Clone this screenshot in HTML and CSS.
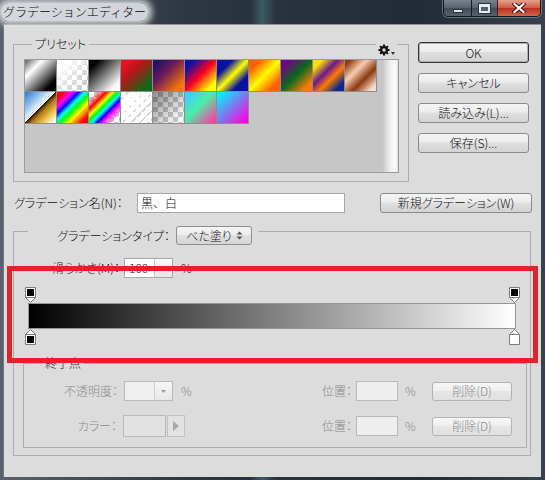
FILE: index.html
```html
<!DOCTYPE html>
<html lang="ja">
<head>
<meta charset="utf-8">
<title>グラデーションエディター</title>
<link rel="stylesheet" href="styles.css">
</head>
<body>
<div class="window">
  <header class="titlebar">
    <span class="title">グラデーションエディター</span>
    <div class="capbtns">
      <span class="cap min"><i class="minbar"></i></span>
      <span class="cap max"><i class="maxbox"></i></span>
      <span class="cap close"><svg width="14" height="10" viewBox="0 0 14 10"><path d="M2.5 1L11.5 9M11.5 1L2.5 9" stroke="#3a0d06" stroke-width="4" stroke-linecap="square"/><path d="M2.5 1L11.5 9M11.5 1L2.5 9" stroke="#fff" stroke-width="2.2" stroke-linecap="square"/></svg></span>
    </div>
  </header>
  <main class="client">
    <div class="top">
      <fieldset class="group presets">
        <legend>プリセット</legend>
        <span class="gear"><svg width="12" height="12" viewBox="0 0 12 12"><g fill="#111"><circle cx="6" cy="6" r="4"/><rect x="5" y="0.5" width="2" height="11"/><rect x="0.5" y="5" width="11" height="2"/><rect x="5" y="0.5" width="2" height="11" transform="rotate(45 6 6)"/><rect x="5" y="0.5" width="2" height="11" transform="rotate(-45 6 6)"/></g><circle cx="6" cy="6" r="1.7" fill="#dcdcdc"/></svg><svg class="gearcaret" width="4" height="3" viewBox="0 0 4 3"><path d="M0 0H4L2 3Z" fill="#333"/></svg></span>
        <div class="swatchbox">
          <div class="swatches">
            <div class="sw s1"></div><div class="sw s2"></div><div class="sw s3"></div><div class="sw s4"></div>
            <div class="sw s5"></div><div class="sw s6"></div><div class="sw s7"></div><div class="sw s8"></div>
            <div class="sw s9"></div><div class="sw s10"></div><div class="sw s11"></div>
            <div class="sw s12"></div><div class="sw s13"></div><div class="sw s14"></div><div class="sw s15"></div>
            <div class="sw s16"></div><div class="sw s17"></div><div class="sw s18"></div>
          </div>
          <div class="vscroll"></div>
        </div>
      </fieldset>
      <div class="btncol">
        <button class="btn ok">OK</button>
        <button class="btn">キャンセル</button>
        <button class="btn">読み込み(L)...</button>
        <button class="btn">保存(S)...</button>
      </div>
    </div>

    <div class="namerow">
      <span class="namelbl">グラデーション名(N)：</span>
      <div class="textbox namebox">黒、白</div>
      <button class="btn newbtn">新規グラデーション(W)</button>
    </div>

    <fieldset class="group typebox">
      <legend class="typelegend">
        <span class="typelbl">グラデーションタイプ：</span>
        <span class="select">べた塗り<svg width="7" height="9" viewBox="0 0 7 9"><path d="M0.5 3.5L3.5 0.5L6.5 3.5Z M0.5 5.5L3.5 8.5L6.5 5.5Z" fill="#555"/></svg></span>
      </legend>

      <div class="row smooth">
        <span class="lbl smlbl">滑らかさ(M)：</span>
        <div class="combo">
          <span class="val">100</span>
          <span class="dd"><svg width="5" height="3" viewBox="0 0 5 3"><path d="M0 0H5L2.5 3Z" fill="#777"/></svg></span>
        </div>
        <span class="pct">%</span>
      </div>

      <div class="editor">
        <div class="track">
          <span class="stop" style="left: calc(0% - 5px)"><svg width="12" height="16" viewBox="0 0 12 16"><path d="M0.5 0.5H10.5V10.5L5.5 15.5L0.5 10.5Z" fill="#fff" stroke="#7c7c7c"/><path d="M0.5 10.5H10.5" stroke="#7c7c7c"/><rect x="2" y="2" width="7" height="7" fill="#000"/></svg></span>
          <span class="stop" style="left: calc(100% - 5px)"><svg width="12" height="16" viewBox="0 0 12 16"><path d="M0.5 0.5H10.5V10.5L5.5 15.5L0.5 10.5Z" fill="#fff" stroke="#7c7c7c"/><path d="M0.5 10.5H10.5" stroke="#7c7c7c"/><rect x="2" y="2" width="7" height="7" fill="#000"/></svg></span>
        </div>
        <div class="gbar"></div>
        <div class="track">
          <span class="stop" style="left: calc(0% - 5px)"><svg width="12" height="16" viewBox="0 0 12 16"><path d="M5.5 0.5L10.5 5.5V15.5H0.5V5.5Z" fill="#fff" stroke="#7c7c7c"/><path d="M0.5 5.5H10.5" stroke="#7c7c7c"/><rect x="2" y="7" width="7" height="7" fill="#000"/></svg></span>
          <span class="stop" style="left: calc(100% - 5px)"><svg width="12" height="16" viewBox="0 0 12 16"><path d="M5.5 0.5L10.5 5.5V15.5H0.5V5.5Z" fill="#fff" stroke="#7c7c7c"/><path d="M0.5 5.5H10.5" stroke="#7c7c7c"/></svg></span>
        </div>
      </div>

      <fieldset class="group stopbox">
        <legend>終了点</legend>
        <div class="row srow r1">
          <span class="lbl slbl dis">不透明度：</span>
          <div class="combo off">
            <span class="val"></span>
            <span class="dd"><svg width="5" height="3" viewBox="0 0 5 3"><path d="M0 0H5L2.5 3Z" fill="#9a9a9a"/></svg></span>
          </div>
          <span class="pct dis">%</span>
          <span class="spacer"></span>
          <span class="lbl plbl dis">位置：</span>
          <div class="textbox off posbox"></div>
          <span class="pct2 dis">%</span>
          <button class="btn del">削除(D)</button>
        </div>
        <div class="row srow r2">
          <span class="lbl slbl clbl dis">カラー：</span>
          <div class="colorpick">
            <span class="chip"></span>
            <span class="arrow"><svg width="6" height="10" viewBox="0 0 6 10"><path d="M0 0L6 5L0 10Z" fill="#a8a8a8"/></svg></span>
          </div>
          <span class="spacer"></span>
          <span class="lbl plbl dis">位置：</span>
          <div class="textbox off posbox"></div>
          <span class="pct2 dis">%</span>
          <button class="btn del">削除(D)</button>
        </div>
      </fieldset>
    </fieldset>
  </main>
  <div class="annot"></div>
</div>
</body>
</html>
```
FILE: styles.css
```css
* { box-sizing: border-box; margin: 0; padding: 0; }
html, body { width: 545px; height: 480px; overflow: hidden; }
body {
  background: #1f2934;
  font-family: "Noto Sans CJK JP", "Noto Sans", sans-serif;
  font-size: 12px;
  font-weight: 300;
  line-height: 16px;
  color: #111;
  font-feature-settings: "palt";
}
.window {
  position: relative;
  width: 545px;
  height: 480px;
  background: linear-gradient(90deg, #59626b 0, #434c55 90px, #2e3741 190px, #29333d 250px, #3c5967 262px, #29333d 276px, #232c36 420px, #37424d 545px);
}

/* title bar */
.titlebar { height: 24px; display: flex; justify-content: space-between; align-items: flex-start; }
.title {
  margin: 3px 0 0 1px;
  padding: 1px 2px;
  font-size: 12px;
  line-height: 16px;
  color: #000;
  font-feature-settings: normal;
  background: rgba(226, 230, 233, 0.9);
  border-radius: 8px;
  box-shadow: 0 0 6px 4px rgba(226, 230, 233, 0.85);
}
.capbtns {
  display: flex;
  margin-right: 4px;
  height: 17px;
  border: 1px solid rgba(15, 20, 26, 0.9);
  border-top: none;
  border-radius: 0 0 5px 5px;
  overflow: hidden;
  box-shadow: 0 0 0 1px rgba(255, 255, 255, 0.3);
}
.cap { display: flex; align-items: center; justify-content: center; height: 16px; }
.min, .max { background: linear-gradient(#78838d, #56616b 50%, #434d57 51%, #56616b); }
.min { width: 27px; }
.max { width: 26px; border-left: 1px solid rgba(15, 20, 26, 0.9); }
.close { width: 43px; border-left: 1px solid #4a1a14; background: linear-gradient(#e7a08e, #cf5a43 50%, #b8301b 51%, #d2654c); }
.minbar { display: block; width: 10px; height: 4px; margin-top: 5px; background: #dfe3e6; border: 1px solid #2a3138; }
.maxbox { display: block; width: 11px; height: 9px; border: 2px solid #e8ebee; border-top-width: 3px; outline: 1px solid #2a3138; background: #50606d; }

/* client area */
.client {
  margin-left: 3px;
  width: 538px;
  height: 453px;
  background: #dcdcdc;
  border-top: 1px solid #8d969e;
  border-left: 1px solid #6f7880;
  padding-left: 9px;
}
.group { border: 1px solid #adadad; min-width: 0; }
.group > legend { padding: 0 3px; line-height: 16px; }

.top { display: flex; align-items: flex-start; margin-top: 11px; }
.presets { position: relative; width: 396px; padding: 7px 9px 8px 10px; }
.presets > legend { margin-left: 8px; }
.gear {
  position: absolute;
  top: -8px;
  left: 362px;
  display: flex;
  align-items: flex-end;
  gap: 1px;
  padding: 0 2px;
  background: #dcdcdc;
}
.gearcaret { margin-bottom: 1px; }
.swatchbox { display: flex; width: 375px; height: 114px; border: 1px solid #9b9b9b; background: #c6c6c6; }
.swatches { flex: 1; display: grid; grid-template-columns: repeat(11, 32px); grid-auto-rows: 32px; align-content: start; }
.sw { border-right: 1px solid #8c8c8c; border-bottom: 1px solid #8c8c8c; }
.vscroll { width: 15px; background: linear-gradient(90deg, #c9c9c9 0%, #e9e9e9 40%, #fdfdfd 75%, #f2f2f2 90%, #d6d6d6 100%); }

.s1 { background: linear-gradient(135deg, #5c5c5c 0%, #fff 28%, #000 82%); }
.s2 { background: linear-gradient(135deg, #fff 15%, rgba(255,255,255,0) 85%), conic-gradient(#cbcbcb 25%, #fff 0 50%, #cbcbcb 0 75%, #fff 0) 0 0 / 10px 10px; }
.s3 { background: linear-gradient(135deg, #000 15%, #fff 85%); }
.s4 { background: linear-gradient(135deg, #e8101c 15%, #b01818 40%, #0b6a16 85%); }
.s5 { background: linear-gradient(135deg, #24106a 10%, #6a1a58 40%, #ff7a00 88%); }
.s6 { background: linear-gradient(135deg, #0a10a8 15%, #ff0020 50%, #ffff00 85%); }
.s7 { background: linear-gradient(135deg, #0a10a0 25%, #ffff00 50%, #0a10a0 75%); }
.s8 { background: linear-gradient(135deg, #ff6000 18%, #ffff00 50%, #ff6000 82%); }
.s9 { background: linear-gradient(135deg, #6a0a7a 15%, #0a6a1a 50%, #ff7a00 85%); }
.s10 { background: linear-gradient(135deg, #ffe000 15%, #6a1a8a 40%, #ff7a00 60%, #0a2a8a 85%); }
.s11 { background: linear-gradient(135deg, #8a3a10 8%, #f8cdb4 35%, #8a3a10 62%, #f6dfd2 90%); }
.s12 { background: linear-gradient(135deg, #2a7ad0 0%, #9cc8f0 30%, #fff 49%, #2a1a00 50%, #b07a10 60%, #f0c850 78%, #fff 95%); }
.s13 { background: linear-gradient(135deg, #ff0000 10%, #ff00ff 25%, #0000ff 35%, #00ffff 45%, #00ff00 55%, #ffff00 68%, #ff0000 88%); }
.s14 { background: linear-gradient(135deg, rgba(255,0,0,0) 12%, #ff0000 28%, #ffff00 38%, #00ff00 46%, #00ffff 54%, #0000ff 62%, #ff00ff 70%, rgba(255,0,255,0) 86%), conic-gradient(#cbcbcb 25%, #fff 0 50%, #cbcbcb 0 75%, #fff 0) 0 0 / 10px 10px; }
.s15 { background: repeating-linear-gradient(135deg, #fff 0 4px, rgba(255,255,255,0.2) 4px 6px), conic-gradient(#cbcbcb 25%, #fff 0 50%, #cbcbcb 0 75%, #fff 0) 0 0 / 10px 10px; }
.s16 { background: linear-gradient(135deg, rgba(0,0,0,0.45) 0%, rgba(0,0,0,0) 90%), conic-gradient(#cbcbcb 25%, #fff 0 50%, #cbcbcb 0 75%, #fff 0) 0 0 / 10px 10px; }
.s17 { background: linear-gradient(135deg, #40ccff 8%, #48f0a8 45%, #ff40a0 92%); }
.s18 { background: linear-gradient(135deg, #00f0ff 8%, #ff00e0 92%); }

.btncol { display: flex; flex-direction: column; gap: 10px; width: 111px; margin: 6px 0 0 9px; }
.btn {
  display: flex;
  align-items: center;
  justify-content: center;
  height: 20px;
  border: 1px solid #8a8a8a;
  border-radius: 3px;
  background: linear-gradient(#f4f4f4, #ececec 45%, #dfdfdf 50%, #d3d3d3);
  font-family: "Noto Sans CJK JP", "Noto Sans", sans-serif;
  font-size: 12px;
  font-weight: 300;
  line-height: 16px;
  font-feature-settings: "palt";
  color: #111;
}
.ok { height: 21px; border-color: #333; box-shadow: inset 0 0 0 1px #b0b0b0; }

.namerow { display: flex; align-items: center; height: 20px; margin-top: 11px; padding-left: 1px; }
.namelbl { width: 123px; }
.textbox { height: 20px; border: 1px solid #a5a7ad; background: #fff; line-height: 18px; padding-left: 3px; }
.namebox { width: 208px; font-feature-settings: normal; }
.newbtn { width: 152px; margin-left: 35px; }

.typebox { width: 518px; margin-top: 13px; padding: 0 3px 7px 9px; }
.typelegend { height: 10px; margin-left: 5px; padding: 0 6px 0 4px !important; display: flex; align-items: flex-start; }
.typelbl { width: 138px; text-align: right; line-height: 19px; }
.select {
  display: flex;
  align-items: center;
  justify-content: space-between;
  width: 76px;
  height: 19px;
  margin-left: 6px;
  padding: 0 8px 0 9px;
  border: 1px solid #8e8e8e;
  border-radius: 3px;
  background: linear-gradient(#f4f4f4, #ececec 45%, #dfdfdf 50%, #d6d6d6);
}

.row { display: flex; align-items: center; height: 20px; }
.lbl { text-align: right; padding-right: 4px; }
.smooth { margin-top: 22px; }
.smlbl { width: 101px; }
.combo { display: flex; width: 49px; height: 20px; border: 1px solid #a5a7ad; background: #fff; }
.combo .val { width: 29px; padding-left: 4px; line-height: 18px; }
.combo .dd { display: flex; align-items: center; justify-content: center; flex: 1; border-left: 1px solid #c9c9c9; background: linear-gradient(#fafafa, #e6e6e6); }
.pct { margin-left: 8px; }

.editor { margin-top: 9px; padding-left: 5px; }
.track { position: relative; height: 16px; width: 484px; margin-left: 2px; }
.stop { position: absolute; top: 0; width: 12px; height: 16px; }
.stop svg { display: block; }
.gbar { width: 488px; height: 26px; border: 1px solid #969696; background: linear-gradient(90deg, #000, #fff); }

.stopbox { width: 504px; margin-top: 10px; padding: 0 14px 10px 0; }
.stopbox > legend { margin-left: 18px; }
.dis { color: #8a8a8a; }
.srow.r1 { margin-top: 10px; }
.srow.r2 { margin-top: 14px; height: 22px; }
.slbl { width: 100px; padding-right: 6px; }
.clbl { width: 99px; }
.combo.off { border-color: #b9b9b9; background: #efefef; }
.combo.off .dd { border-left-color: #cfcfcf; background: linear-gradient(#f6f6f6, #e8e8e8); }
.spacer { flex: 1; }
.textbox.off { border-color: #b9b9b9; background: #eeeeee; }
.posbox { width: 42px; }
.plbl { padding-right: 4px; }
.pct2 { width: 34px; padding-left: 7px; }
.del { width: 80px; height: 19px; color: #8a8a8a; border-color: #b3b3b3; background: linear-gradient(#f6f6f6, #efefef 45%, #e6e6e6 50%, #e0e0e0); }
.colorpick { display: flex; height: 22px; }
.chip { width: 43px; border: 1px solid #b9b9b9; background: #e2e2e2; }
.arrow { width: 18px; margin-left: 1px; display: flex; align-items: center; justify-content: center; border: 1px solid #c2c2c2; background: #e2e2e2; }

/* annotation overlay */
.annot {
  position: absolute;
  left: 7px;
  top: 266px;
  width: 531px;
  height: 97px;
  border: 5px solid #e6212a;
  pointer-events: none;
}
```
